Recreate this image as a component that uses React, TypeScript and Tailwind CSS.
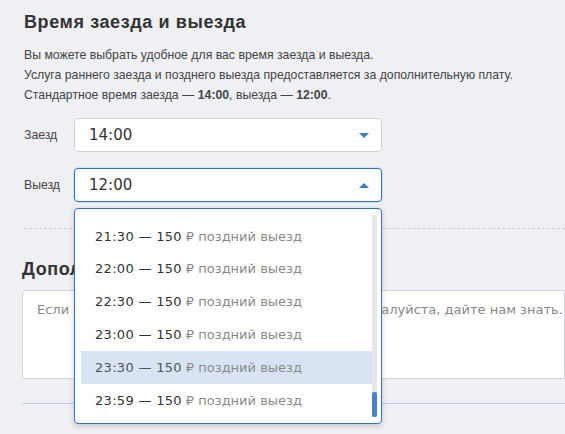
import { useState } from "react";

const CHECKOUT_OPTIONS = [
  { time: "21:30", price: 150 },
  { time: "22:00", price: 150 },
  { time: "22:30", price: 150 },
  { time: "23:00", price: 150 },
  { time: "23:30", price: 150 },
  { time: "23:59", price: 150 },
];

const Caret = ({ up = false }: { up?: boolean }) => (
  <svg width="10" height="5" viewBox="0 0 10 5" className="shrink-0">
    {up ? (
      <path d="M0 5 L5 0 L10 5 Z" fill="#3d7cc9" />
    ) : (
      <path d="M0 0 L10 0 L5 5 Z" fill="#3d7cc9" />
    )}
  </svg>
);

const App = () => {
  const [hovered] = useState("23:30");
  return (
    <div className="w-[565px] h-[434px] overflow-hidden bg-[#eff0f4] font-['Liberation_Sans',Arial,sans-serif] text-[#333]">
      <div className="pl-6 pt-[10px]">
        {/* TITLE */}
        <h2 className="text-[18px] tracking-[0.6px] font-bold leading-[24px] text-[#333]">
          Время заезда и выезда
        </h2>
        <div className="mt-[11px] text-[12.25px] leading-[20px] text-[#444]">
          <p>Вы можете выбрать удобное для вас время заезда и выезда.</p>
          <p>
            Услуга раннего заезда и позднего выезда предоставляется за
            дополнительную плату.
          </p>
          <p>
            Стандартное время заезда — <b>14:00</b>, выезда — <b>12:00</b>.
          </p>
        </div>

        {/* SELECTS */}
        <div className="mt-[13px] flex flex-col gap-4">
          <div className="flex items-center">
            <span className="w-[50px] text-[12.25px] text-[#444]">Заезд</span>
            <div className="w-[308px] h-[34px] bg-white border border-[#cfd2d8] rounded-[4px] flex items-center justify-between pl-[14px] pr-[12px] font-['DejaVu_Sans',sans-serif] text-[15px] text-[#333]">
              <span>14:00</span>
              <Caret />
            </div>
          </div>
          <div className="relative flex items-center">
            <span className="w-[50px] text-[12.25px] text-[#444]">Выезд</span>
            <div className="w-[308px] h-[34px] bg-white border border-[#2f74c8] rounded-[4px] shadow-[0_0_0_1px_rgba(47,116,200,0.15)] flex items-center justify-between pl-[14px] pr-[12px] font-['DejaVu_Sans',sans-serif] text-[15px] text-[#333]">
              <span>12:00</span>
              <Caret up />
            </div>

            {/* DROPDOWN LIST */}
            <div className="absolute left-[50px] top-[40px] z-10 w-[308px] h-[216px] bg-white border border-[#2f74c8] rounded-[4px] shadow-[0_2px_6px_rgba(0,0,0,0.18)] flex pl-[6px] pr-[4px] py-[6px]">
              <div className="flex-1 flex flex-col pt-[5px]">
                {CHECKOUT_OPTIONS.map(({ time, price }) => (
                  <div
                    key={time}
                    className={`h-[33px] flex items-center pl-[14px] font-['DejaVu_Sans',sans-serif] text-[13px] ${
                      time === hovered ? "bg-[#d8e4f3]" : ""
                    }`}
                  >
                    <span
                      className={`tracking-[0.3px] ${
                        time === hovered ? "text-[#555]" : "text-[#333]"
                      }`}
                    >
                      {time} — {price}
                    </span>
                    <span className="ml-[4px] text-[#8a8a8a]">
                      ₽ поздний выезд
                    </span>
                  </div>
                ))}
              </div>
              <div className="w-[5px] bg-[#e6e6e6] rounded-[2px] flex flex-col justify-end">
                <div className="h-[25px] bg-[#4a80c8] rounded-[2px]" />
              </div>
            </div>
          </div>
        </div>
      </div>

      {/* EXTRA WISHES */}
      <div className="mt-[26px] ml-6 border-t border-dashed border-[#c9ccd2]" />
      <div className="pl-[22px] pt-[28px]">
        <h2 className="text-[18px] tracking-[0.6px] font-bold leading-[24px] text-[#333]">
          Дополнительные пожелания
        </h2>
        <div className="mt-[9px] h-[89px] bg-white border border-[#cfd2d8] rounded-l-[4px] pl-[14px] pt-[9px] font-['DejaVu_Sans',sans-serif] text-[13px] text-[#888]">
          Если у вас есть дополнительные пожелания, пожалуйста, дайте нам знать.
        </div>
        <div className="mt-[24px] border-t border-[#b9cde3]" />
      </div>
    </div>
  );
};

export default App;
